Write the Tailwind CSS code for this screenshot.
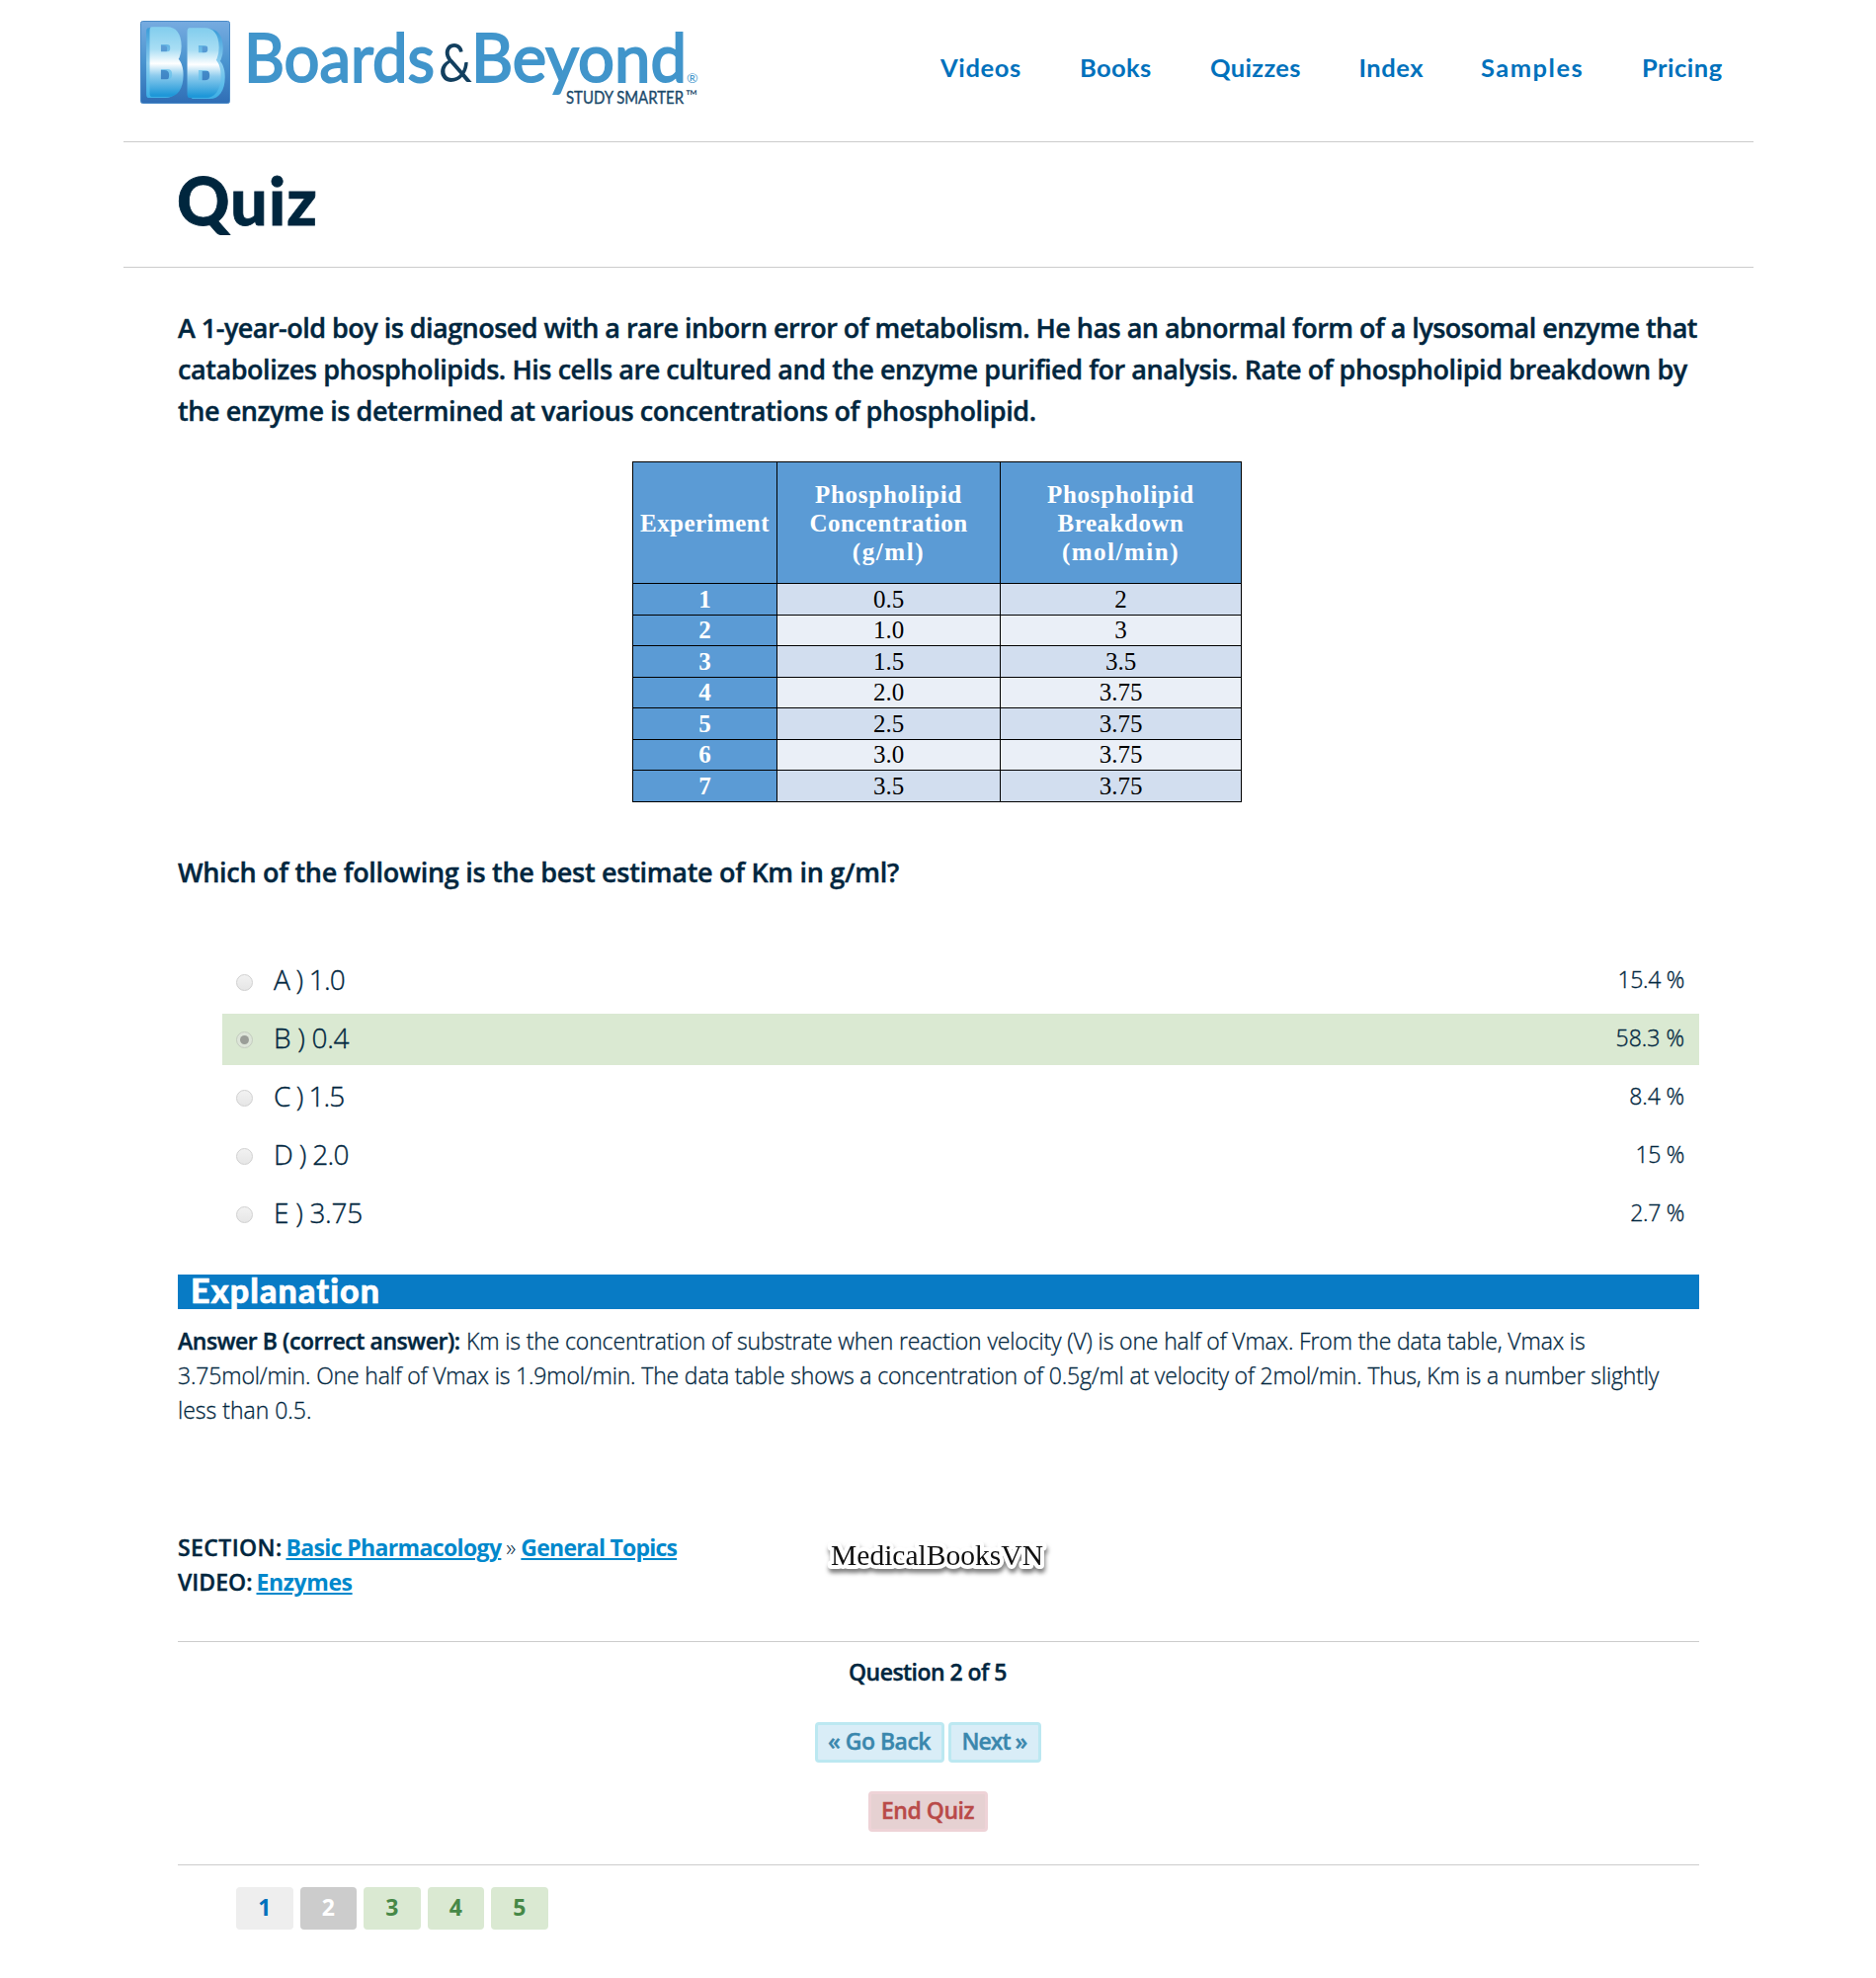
<!DOCTYPE html>
<html lang="en">
<head>
<meta charset="utf-8">
<title>Quiz</title>
<script src="https://cdn.jsdelivr.net/npm/@tailwindcss/browser@4"></script>
</head>
<body class="bg-white font-['Open_Sans',sans-serif] text-[#00263e]">
<div class="relative h-[2002px] w-[1899px] overflow-hidden">
<header class="mx-[125px] flex h-[144px] w-[1650px] items-start border-b border-[#ccc]">
  <svg class="h-[143px] w-[620px] shrink-0" viewBox="125 0 620 143">
    <defs>
      <linearGradient id="tile" x1="0" y1="0" x2="0" y2="1"><stop offset="0" stop-color="#77abe0"/><stop offset=".5" stop-color="#4a94cf"/><stop offset="1" stop-color="#2f6db5"/></linearGradient>
      <linearGradient id="face" gradientUnits="userSpaceOnUse" x1="0" y1="-64" x2="0" y2="2"><stop offset="0" stop-color="#86cfee"/><stop offset=".3" stop-color="#a9def4"/><stop offset=".52" stop-color="#fff"/><stop offset=".7" stop-color="#8fcdee"/><stop offset="1" stop-color="#1f97d8"/></linearGradient>
      <linearGradient id="side" gradientUnits="userSpaceOnUse" x1="0" y1="-64" x2="0" y2="2"><stop offset="0" stop-color="#3f9fda"/><stop offset=".5" stop-color="#8fd0f0"/><stop offset="1" stop-color="#3fb0e6"/></linearGradient>
    </defs>
    <rect x="142.500" y="21.500" width="90" height="83" rx="2" fill="url(#tile)" stroke="#4a8bc8"/>
    <g font-family="Liberation Sans" font-weight="700" font-size="90" stroke-width="8" stroke-linejoin="round">
      <text transform="translate(147 95) scale(.55 1)" fill="url(#side)" stroke="url(#side)">B</text>
      <text transform="translate(192 96) scale(.55 1)" fill="url(#side)" stroke="url(#side)">B</text>
      <text transform="translate(150.500 94) scale(.54 1)" fill="url(#face)" stroke="url(#face)">B</text>
      <text transform="translate(188.500 95) scale(.54 1)" fill="url(#face)" stroke="url(#face)">B</text>
    </g>
    <g font-family="Lato">
      <text x="247" y="83" font-size="68" fill="#4195cb" stroke="#4195cb" stroke-width="2" textLength="193" lengthAdjust="spacingAndGlyphs">Boards</text>
      <text x="444" y="83" font-size="55" fill="#123f5f" textLength="34" lengthAdjust="spacingAndGlyphs">&amp;</text>
      <text x="477" y="83" font-size="68" fill="#4195cb" stroke="#4195cb" stroke-width="2" textLength="218" lengthAdjust="spacingAndGlyphs">Beyond</text>
      <text x="695" y="84" font-size="14" fill="#4195cb">®</text>
      <text x="573" y="105" font-size="18" fill="#1c4a6b" stroke="#1c4a6b" stroke-width=".4" textLength="119" lengthAdjust="spacingAndGlyphs">STUDY SMARTER</text>
      <text x="694" y="103" font-size="16" fill="#1c4a6b">™</text>
    </g>
  </svg>
  <nav class="mt-[50px] ml-[207px] flex font-['Lato'] text-[25.5px] leading-9 font-bold whitespace-nowrap text-[#0071bc]">
    <a class="w-[141px] tracking-[.6px]">Videos</a>
    <a class="w-[132px] tracking-[.35px]">Books</a>
    <a class="w-[150.5px] tracking-[.35px]">Quizzes</a>
    <a class="w-[123.5px] tracking-[.5px]">Index</a>
    <a class="w-[163px] tracking-[1.5px]">Samples</a>
    <a class="tracking-[.5px]">Pricing</a>
  </nav>
</header>
<div class="mx-[125px] h-[127px] w-[1650px] border-b border-[#ccc] pt-6 pl-[54px]">
  <h1 class="font-['Lato'] text-[66px] leading-[70px] font-black tracking-[1.2px] [-webkit-text-stroke:0.8px_#00263e]">Quiz</h1>
</div>
<main class="ml-[180px] w-[1540px]">
  <div class="pt-10 text-[27px] leading-[42px] font-semibold whitespace-nowrap [-webkit-text-stroke:0.4px_#00263e]">
    <p class="tracking-[-0.526px]">A 1-year-old boy is diagnosed with a rare inborn error of metabolism. He has an abnormal form of a lysosomal enzyme that</p>
    <p class="tracking-[-0.436px]">catabolizes phospholipids. His cells are cultured and the enzyme purified for analysis. Rate of phospholipid breakdown by</p>
    <p class="tracking-[-0.423px]">the enzyme is determined at various concentrations of phospholipid.</p>
  </div>
  <div class="mt-[30px] ml-[460px] h-[345px]">
    <div class="grid w-[617px] grid-cols-[146px_226px_244px] grid-rows-[123px_repeat(7,31.5px)] border-t border-l border-black text-center font-['Liberation_Serif'] text-[25px] leading-[29px] text-black *:flex *:items-center *:justify-center *:border-r *:border-b *:border-black">
      <div class="bg-[#5b9bd5] font-bold tracking-[.46px] text-white">Experiment</div>
      <div class="flex-col bg-[#5b9bd5] font-bold text-white"><span class="tracking-[.72px]">Phospholipid</span><span class="tracking-[.45px]">Concentration</span><span class="tracking-[1.6px]">(g/ml)</span></div>
      <div class="flex-col bg-[#5b9bd5] font-bold text-white"><span class="tracking-[.72px]">Phospholipid</span><span class="tracking-[.53px]">Breakdown</span><span class="tracking-[1.5px]">(mol/min)</span></div>
      <div class="bg-[#5b9bd5] font-bold text-white">1</div><div class="bg-[#d2deef]">0.5</div><div class="bg-[#d2deef]">2</div>
      <div class="bg-[#5b9bd5] font-bold text-white">2</div><div class="bg-[#eaeff7]">1.0</div><div class="bg-[#eaeff7]">3</div>
      <div class="bg-[#5b9bd5] font-bold text-white">3</div><div class="bg-[#d2deef]">1.5</div><div class="bg-[#d2deef]">3.5</div>
      <div class="bg-[#5b9bd5] font-bold text-white">4</div><div class="bg-[#eaeff7]">2.0</div><div class="bg-[#eaeff7]">3.75</div>
      <div class="bg-[#5b9bd5] font-bold text-white">5</div><div class="bg-[#d2deef]">2.5</div><div class="bg-[#d2deef]">3.75</div>
      <div class="bg-[#5b9bd5] font-bold text-white">6</div><div class="bg-[#eaeff7]">3.0</div><div class="bg-[#eaeff7]">3.75</div>
      <div class="bg-[#5b9bd5] font-bold text-white">7</div><div class="bg-[#d2deef]">3.5</div><div class="bg-[#d2deef]">3.75</div>
    </div>
  </div>
  <p class="mt-[50px] text-[27px] leading-[42px] font-semibold tracking-[-0.29px] [-webkit-text-stroke:0.4px_#00263e]">Which of the following is the best estimate of Km in g/ml?</p>

  <div class="mt-[63px] ml-[45px] flex flex-col gap-[7px] text-[28px] leading-[48px] font-light [-webkit-text-stroke:0.35px_#00263e]">
    <div class="flex h-[52px] pr-[15px] pl-[14px]"><i class="mt-[19px] mr-[21px] size-[17px] rounded-full border border-[#d0d0d0] bg-linear-to-b from-[#f2f2f2] to-[#e6e6e6]"></i><span class="tracking-[-0.8px]">A ) 1.0</span><span class="ml-auto text-[23px] tracking-[-0.3px]">15.4 %</span></div>
    <div class="flex h-[52px] bg-[#dae9d2] pr-[15px] pl-[14px]"><i class="mt-[18px] mr-[21px] flex size-[17px] items-center justify-center rounded-full border border-[#c3cbbf] bg-[#dde5d9]"><b class="size-[9px] rounded-full bg-[#9a9e98]"></b></i><span class="tracking-[-0.3px]">B ) 0.4</span><span class="ml-auto text-[23px]">58.3 %</span></div>
    <div class="flex h-[52px] pr-[15px] pl-[14px]"><i class="mt-[18px] mr-[21px] size-[17px] rounded-full border border-[#d0d0d0] bg-linear-to-b from-[#f2f2f2] to-[#e6e6e6]"></i><span class="tracking-[-1px]">C ) 1.5</span><span class="ml-auto text-[23px] tracking-[-0.1px]">8.4 %</span></div>
    <div class="flex h-[52px] pr-[15px] pl-[14px]"><i class="mt-[18px] mr-[21px] size-[17px] rounded-full border border-[#d0d0d0] bg-linear-to-b from-[#f2f2f2] to-[#e6e6e6]"></i><span class="tracking-[-0.7px]">D ) 2.0</span><span class="ml-auto text-[23px] tracking-[-0.3px]">15 %</span></div>
    <div class="flex h-[52px] pr-[15px] pl-[14px]"><i class="mt-[18px] mr-[21px] size-[17px] rounded-full border border-[#d0d0d0] bg-linear-to-b from-[#f2f2f2] to-[#e6e6e6]"></i><span class="tracking-[-0.3px]">E ) 3.75</span><span class="ml-auto text-[23px] tracking-[-0.3px]">2.7 %</span></div>
  </div>

  <h2 class="mt-[35px] h-[35px] bg-[#087bc5] pl-[13px] font-['Lato'] text-[34px] leading-[32px] font-black tracking-[1.1px] text-white [-webkit-text-stroke:0.6px_#fff]">Explanation</h2>
  <div class="mt-[15px] text-[23px] leading-[35px] font-light whitespace-nowrap [-webkit-text-stroke:0.3px_#00263e]">
    <p><b class="inline-block w-[292px] font-semibold tracking-[-0.44px] [-webkit-text-stroke:0.4px_#00263e]">Answer B (correct answer):</b><span class="tracking-[-0.14px]">Km is the concentration of substrate when reaction velocity (V) is one half of Vmax. From the data table, Vmax is</span></p>
    <p class="tracking-[-0.16px]">3.75mol/min. One half of Vmax is 1.9mol/min. The data table shows a concentration of 0.5g/ml at velocity of 2mol/min. Thus, Km is a number slightly</p>
    <p>less than 0.5.</p>
  </div>
  <div class="mt-[104px] text-[23px] leading-[35px] font-semibold whitespace-nowrap">
    <p class="flex"><span class="w-[109.5px] tracking-[.4px] [-webkit-text-stroke:0.4px_#00263e]">SECTION:</span><a class="font-bold tracking-[-0.64px] text-[#0088cc] underline decoration-2 underline-offset-2">Basic Pharmacology</a><span class="w-[20px] text-center font-light">»</span><a class="font-bold tracking-[-0.78px] text-[#0088cc] underline decoration-2 underline-offset-2">General Topics</a></p>
    <p class="flex"><span class="w-[79.5px] [-webkit-text-stroke:0.4px_#00263e]">VIDEO:</span><a class="font-bold tracking-[-0.4px] text-[#0088cc] underline decoration-2 underline-offset-2">Enzymes</a></p>
  </div>

  <div class="mt-[42px] border-t border-[#ccc] pt-[13px] text-[23px]">
    <div class="flex w-[1518px] flex-col items-center font-semibold">
      <p class="leading-[35px] tracking-[-0.528px] [-webkit-text-stroke:0.4px_#00263e]">Question 2 of 5</p>
      <div class="mt-[33px] flex gap-1 leading-[33px] text-[#3a87ad] [-webkit-text-stroke:0.4px_#3a87ad]">
        <a class="h-[41px] w-[131px] rounded-[4px] border-3 border-[#bce8f1] bg-[#d9edf7] text-center tracking-[-0.5px]">« Go Back</a>
        <a class="h-[41px] w-[94px] rounded-[4px] border-3 border-[#bce8f1] bg-[#d9edf7] text-center tracking-[-1px]">Next »</a>
      </div>
      <a class="mt-[29px] h-[41px] w-[121px] rounded-[4px] border-3 border-[#eed3d7] bg-[#e6d1d2] text-center leading-[33px] tracking-[-0.484px] text-[#b94a48] [-webkit-text-stroke:0.4px_#b94a48]">End Quiz</a>
    </div>
  </div>
  <div class="mt-[33px] flex gap-[7px] border-t border-[#ccc] pt-[22px] pl-[59px] text-center text-[23px] leading-[41px] font-bold text-[#468847] *:h-[43px] *:w-[57.5px] *:rounded-[4px]">
    <a class="bg-[#eee] text-[#0071bc]">1</a>
    <a class="bg-[#ccc] text-white">2</a>
    <a class="bg-[#dae9d2]">3</a>
    <a class="bg-[#dae9d2]">4</a>
    <a class="bg-[#dae9d2]">5</a>
  </div>
</main>
<svg class="absolute top-[1550px] left-[832px] h-[50px] w-[236px]" viewBox="0 0 236 50">
  <text x="9" y="34" font-family="Liberation Serif" font-size="29" fill="#111" stroke="#fff" stroke-width="8" stroke-linejoin="round" paint-order="stroke" textLength="215" lengthAdjust="spacingAndGlyphs" class="drop-shadow-[1px_4px_2px_rgba(0,0,0,0.5)]">MedicalBooksVN</text>
</svg>
</div>
</body>
</html>
